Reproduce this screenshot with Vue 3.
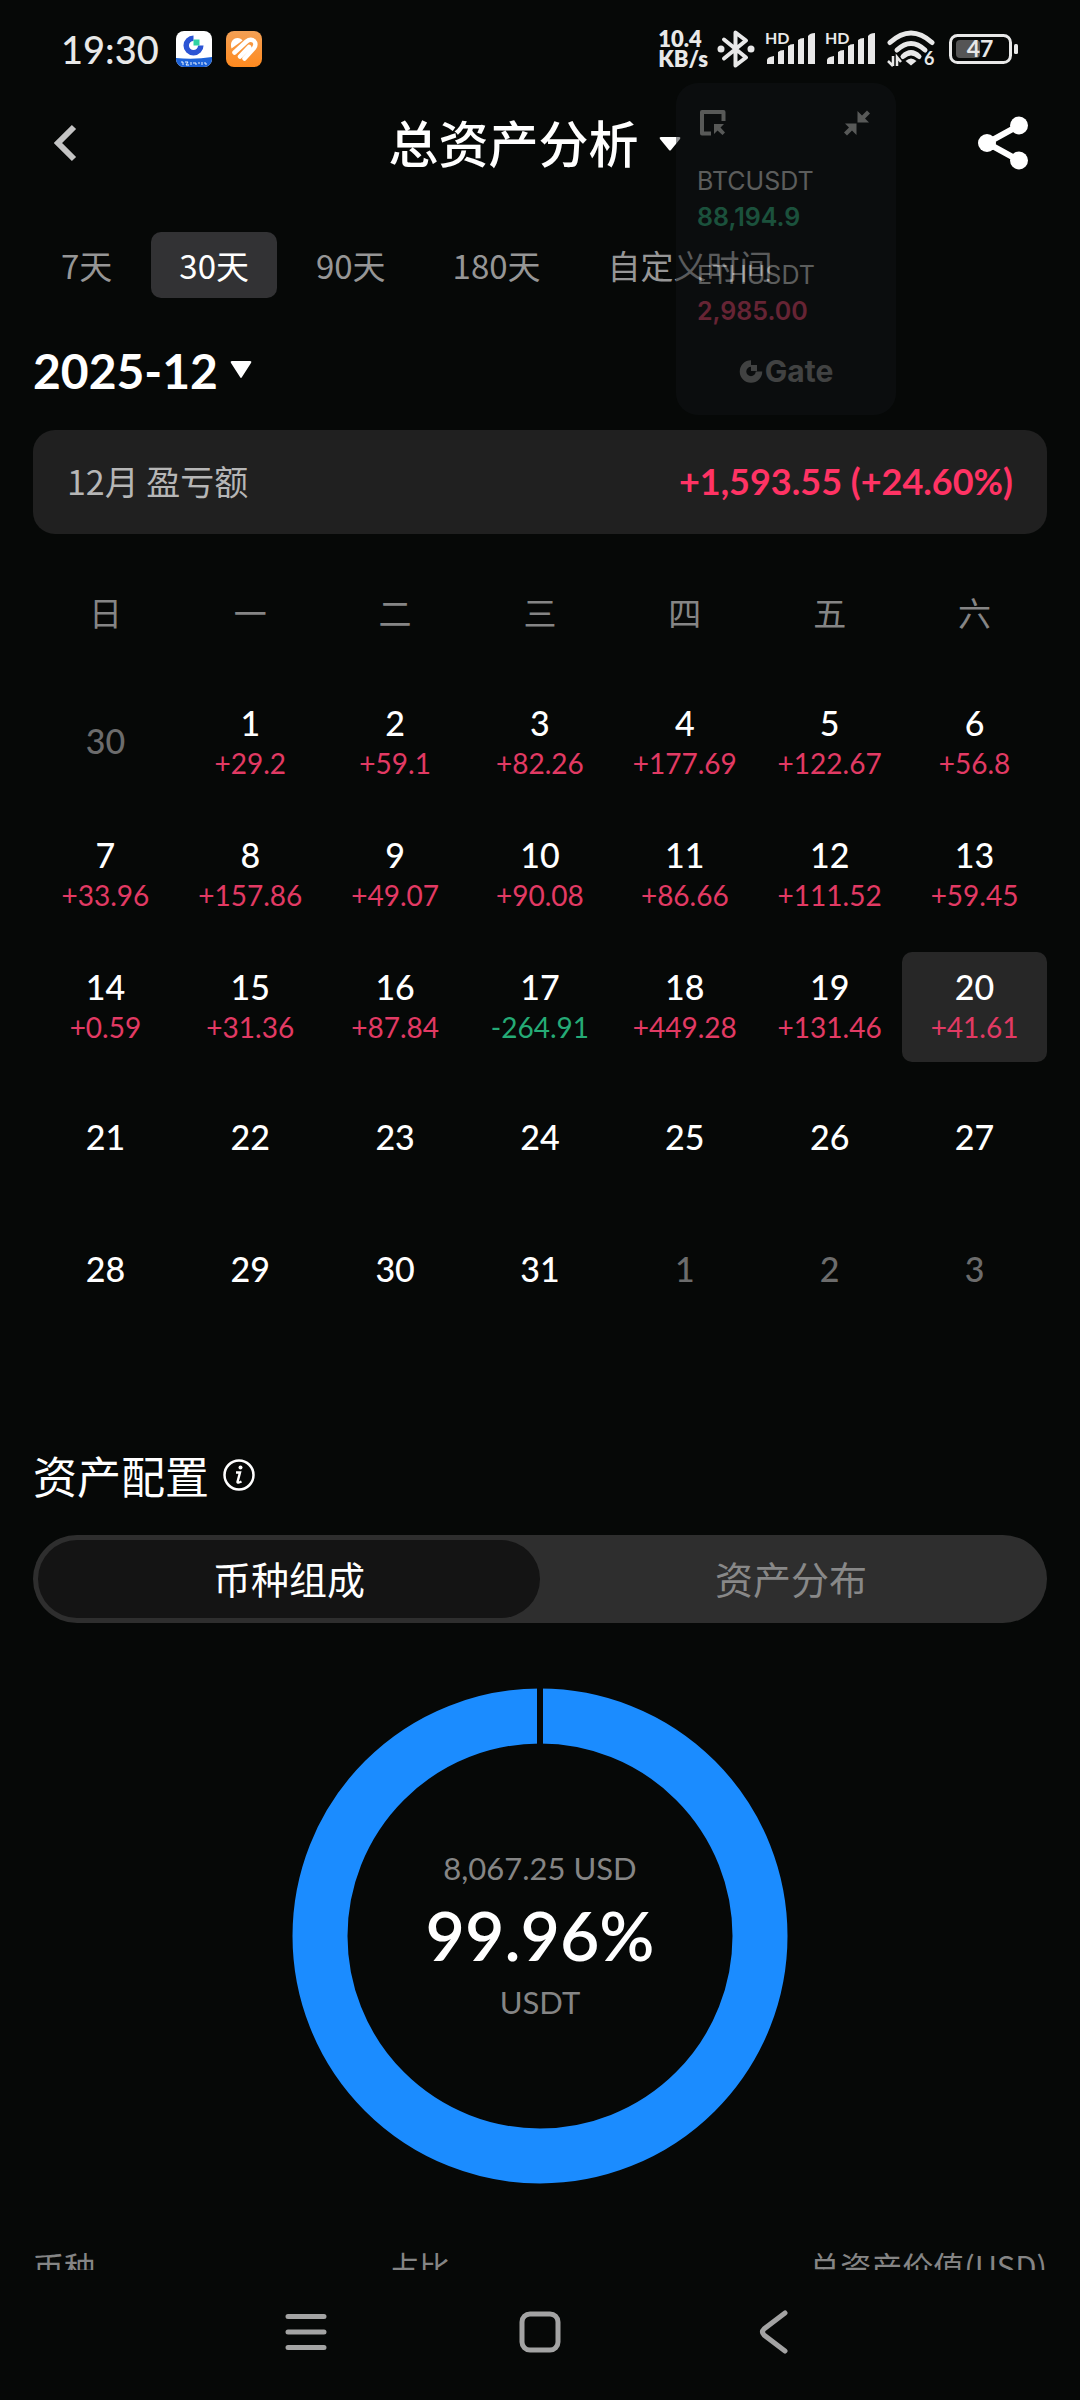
<script setup>
import { ref } from 'vue'

const ranges = ['7天', '30天', '90天', '180天', '自定义时间']
const activeRange = ref('30天')

const weekdays = ['日', '一', '二', '三', '四', '五', '六']
const d = (day, pnl = '', other = false) => ({ day, pnl, other })
const weeks = [
  [d(30, '', true), d(1, '+29.2'), d(2, '+59.1'), d(3, '+82.26'), d(4, '+177.69'), d(5, '+122.67'), d(6, '+56.8')],
  [d(7, '+33.96'), d(8, '+157.86'), d(9, '+49.07'), d(10, '+90.08'), d(11, '+86.66'), d(12, '+111.52'), d(13, '+59.45')],
  [d(14, '+0.59'), d(15, '+31.36'), d(16, '+87.84'), d(17, '-264.91'), d(18, '+449.28'), d(19, '+131.46'), d(20, '+41.61')],
  [d(21), d(22), d(23), d(24), d(25), d(26), d(27)],
  [d(28), d(29), d(30), d(31), d(1, '', true), d(2, '', true), d(3, '', true)],
]
const selectedDay = ref(20)

const segments = ['币种组成', '资产分布']
const activeSegment = ref('币种组成')

const tickers = [
  { pair: 'BTCUSDT', price: '88,194.9', trend: 'green' },
  { pair: 'ETHUSDT', price: '2,985.00', trend: 'red' },
]
</script>

<template>
  <div class="screen">
    <div class="status">
      <div class="status-side">
        <span class="clock">19:30</span>
        <svg class="app-icon" viewBox="0 0 36 36">
          <clipPath id="tile"><rect width="36" height="36" rx="8" /></clipPath>
          <g clip-path="url(#tile)">
            <rect width="36" height="36" fill="#fff" />
            <path d="M17.500 7.200A7.300 7.300 0 1 0 24.800 14.500" fill="none" stroke="#2b54d4" stroke-width="5.500" />
            <rect x="17.500" y="8.500" width="6" height="6" fill="#2fd3a4" />
            <path d="M0 27Q18 29 36 26V36H0Z" fill="#1c62d8" />
            <path d="M5 31h2v3M9 31h3l-2 3h3M15 31v3M17 32h3v2M22 32h2M26 31v3M28 32h2v2" fill="none" stroke="#e8f2ff" stroke-width="1" />
          </g>
        </svg>
        <svg class="app-icon" viewBox="0 0 36 36">
          <defs>
            <linearGradient id="warm" x1="0" y1="0" x2="0" y2="1">
              <stop offset="0" stop-color="#f3a055" />
              <stop offset="1" stop-color="#ff8a1f" />
            </linearGradient>
          </defs>
          <rect width="36" height="36" rx="8" fill="url(#warm)" />
          <path d="M5.500 17.500C3.500 11.500 7 7 11.500 7C14 7 15.500 8 16.500 9.500Z" fill="#fff" />
          <path d="M8.500 21.500L20.500 10.500C26.500 5.500 32 12 28 17L18.500 27.500M14 25.500L23 16" fill="none" stroke="#fff" stroke-width="4.500" stroke-linecap="round" />
        </svg>
      </div>
      <div class="status-side">
        <span class="speed"><span>10.4</span><span>KB/s</span></span>
        <svg width="38" height="40" viewBox="0 0 38 40" class="bt">
          <path d="M7 10.500L29 28.500L18.500 36.500V3.500L29 11.500L7 29.500" fill="none" stroke="#e8e8e8" stroke-width="4" stroke-linejoin="round" stroke-linecap="round" />
          <circle cx="4" cy="20" r="3.500" fill="#e8e8e8" /><circle cx="34" cy="20" r="3.500" fill="#e8e8e8" />
        </svg>
        <svg v-for="n in 2" :key="n" width="50" height="42" viewBox="0 -4 50 42" class="signal">
          <text x="0" y="12" font-size="16">HD</text>
          <path d="M2 32v-4q0-3 7-4v8ZM13 32V20q2-2 6-2v14ZM23 32V14q2-2 6-2v20ZM33 32V8q2-2 6-2v26ZM43 32V4q2-3 7-3v31Z" />
        </svg>
        <svg width="50" height="44" viewBox="0 -3 50 44" class="wifi">
          <g fill="none" stroke="#e8e8e8" stroke-width="5" stroke-linecap="round">
            <path d="M3 12.500Q24 -6.500 45 12.500" /><path d="M10 20Q24 7 38 20" /><path d="M16 26.500Q24 19 32 26.500" />
          </g>
          <path d="M18.500 31Q24 26 29.500 31L24 35.500Z" fill="#e8e8e8" />
          <path d="M6 26v10M1 31l5 5M10 36V27l4 5" fill="none" stroke="#e8e8e8" stroke-width="2.500" />
          <text x="37" y="35" font-size="18">6</text>
        </svg>
        <svg width="70" height="32" viewBox="0 0 70 32" class="battery">
          <rect x="7" y="7" width="24" height="18" rx="4" fill="#555" />
          <rect x="1.500" y="2.500" width="60" height="27" rx="7" fill="none" stroke="#e8e8e8" stroke-width="3" />
          <rect x="65" y="11" width="4" height="10" rx="1.500" fill="#e8e8e8" />
          <text x="31" y="24" font-size="23" text-anchor="middle">47</text>
        </svg>
      </div>
    </div>

    <header class="bar">
      <button class="icon-btn" aria-label="返回">
        <svg width="24" height="38" viewBox="0 0 24 38"><path d="M20 3L4 19L20 35" fill="none" stroke="#c4c4c4" stroke-width="6" /></svg>
      </button>
      <button class="title">
        总资产分析
        <svg width="22" height="16" viewBox="0 0 22 16"><path d="M2 1H20Q22 1 21 3L12 14Q11 15 10 14L1 3Q0 1 2 1Z" fill="#fff" /></svg>
      </button>
      <button class="icon-btn share" aria-label="分享">
        <svg width="52" height="54" viewBox="0 0 52 54">
          <path d="M42 9.500L10 27L42 44.500" fill="none" stroke="#fff" stroke-width="6" />
          <g fill="#fff"><circle cx="42" cy="9.500" r="9" /><circle cx="10" cy="27" r="9" /><circle cx="42" cy="44.500" r="9" /></g>
        </svg>
      </button>
    </header>

    <main class="content">
      <nav class="ranges">
        <button v-for="r in ranges" :key="r" class="range" :class="{ active: r === activeRange }" @click="activeRange = r">{{ r }}</button>
      </nav>

      <button class="month">
        2025-12
        <svg width="22" height="18" viewBox="0 0 22 18"><path d="M2 0H20Q22 0 21 2L12 16Q11 18 10 16L1 2Q0 0 2 0Z" fill="#fff" /></svg>
      </button>

      <section class="summary">
        <span class="summary-label">12月 盈亏额</span>
        <strong class="summary-value">+1,593.55 (+24.60%)</strong>
      </section>

      <table class="calendar">
        <thead>
          <tr><th v-for="w in weekdays" :key="w">{{ w }}</th></tr>
        </thead>
        <tbody>
          <tr v-for="(week, i) in weeks" :key="i">
            <td v-for="c in week" :key="c.day">
              <button class="day" :class="{ other: c.other, selected: !c.other && c.day === selectedDay }" @click="selectedDay = c.day">
                <span class="num">{{ c.day }}</span>
                <span v-if="c.pnl" class="pnl" :class="{ loss: c.pnl[0] === '-' }">{{ c.pnl }}</span>
              </button>
            </td>
          </tr>
        </tbody>
      </table>

      <h2 class="section-title">
        资产配置
        <svg width="34" height="34" viewBox="0 0 34 34">
          <circle cx="17" cy="17" r="14.500" fill="none" stroke="#fff" stroke-width="2.500" />
          <circle cx="18.500" cy="9.500" r="2" fill="#fff" />
          <path d="M14 14.500H18L15.500 24Q15.500 25.500 19.500 23.500" fill="none" stroke="#fff" stroke-width="2.400" />
        </svg>
      </h2>

      <div class="segmented">
        <button v-for="s in segments" :key="s" class="segment" :class="{ active: s === activeSegment }" @click="activeSegment = s">{{ s }}</button>
      </div>

      <div class="donut">
        <svg class="ring" viewBox="0 0 496 496">
          <circle cx="248" cy="248" r="220" fill="none" stroke="#1b8cff" stroke-width="55" />
          <rect x="245" y="0" width="6" height="60" fill="#060807" />
        </svg>
        <div class="donut-text">
          <span class="small">8,067.25 USD</span>
          <span class="big">99.96%</span>
          <span class="small">USDT</span>
        </div>
      </div>

      <table class="holdings">
        <thead>
          <tr><th>币种</th><th>占比</th><th>总资产价值(USD)</th></tr>
        </thead>
      </table>
    </main>

    <nav class="system">
      <button aria-label="最近任务">
        <svg width="42" height="44" viewBox="0 0 42 44"><path d="M3 6.500H39M3 22H39M3 37.500H39" stroke="#a3a3a3" stroke-width="5" stroke-linecap="round" /></svg>
      </button>
      <button aria-label="主屏幕">
        <svg width="42" height="44" viewBox="0 0 42 44"><rect x="3" y="4" width="36" height="36" rx="8" fill="none" stroke="#a3a3a3" stroke-width="5" /></svg>
      </button>
      <button aria-label="返回上一页">
        <svg width="42" height="44" viewBox="0 0 42 44"><path d="M32 3L11 19Q8 22 11 25L32 41" fill="none" stroke="#a3a3a3" stroke-width="5" stroke-linecap="round" /></svg>
      </button>
    </nav>

    <aside class="floating">
      <div class="floating-tools">
        <svg width="26" height="26" viewBox="0 0 26 26">
          <path d="M23.500 11V2H2V23.500H11" fill="none" stroke="#bbb" stroke-width="4" stroke-linejoin="round" />
          <path d="M14 14H24L20.500 17.500L25 22.500L22.500 25L17.500 20.500L14 24Z" fill="#bbb" />
        </svg>
        <svg width="26" height="26" viewBox="0 0 26 26">
          <path d="M13.500 1V12.500H25L21 8.500L26 3.500L23 0.500L18 5.500ZM12.500 25V13.500H1L5 17.500L0 22.500L3 25.500L8 20.500Z" fill="#bbb" />
        </svg>
      </div>
      <div v-for="t in tickers" :key="t.pair" class="ticker">
        <span class="pair">{{ t.pair }}</span>
        <span class="price" :class="t.trend">{{ t.price }}</span>
      </div>
      <div class="brand">
        <svg width="24" height="24" viewBox="0 0 24 24">
          <path d="M12 4.500A8 8 0 1 0 20 12.500" fill="none" stroke="#8a8a8a" stroke-width="6.500" />
          <rect x="12" y="6" width="6" height="6" fill="#8a8a8a" />
        </svg>
        Gate
      </div>
    </aside>
  </div>
</template>

<style>
body {
  margin: 0;
  background: #060807;
}
</style>

<style scoped>
.screen {
  position: relative;
  display: flex;
  flex-direction: column;
  height: 100vh;
  overflow: hidden;
  background: #060807;
  color: #fff;
  font-family: Lato, "Noto Sans CJK SC", sans-serif;
}
button {
  padding: 0;
  border: 0;
  background: none;
  color: inherit;
  font: inherit;
}
svg {
  display: block;
  flex: none;
}
.status {
  display: flex;
  align-items: center;
  justify-content: space-between;
  height: 98px;
  padding: 0 61px;
  color: #e8e8e8;
}
.status-side {
  display: flex;
  align-items: center;
}
.clock {
  margin-right: 17px;
  font-size: 38px;
  font-weight: 500;
}
.app-icon {
  width: 36px;
  height: 36px;
  margin-right: 14px;
}
.speed {
  display: flex;
  flex-direction: column;
  font-size: 22px;
  font-weight: 800;
  line-height: 20px;
}
.status text {
  fill: #e8e8e8;
  font-family: Lato, sans-serif;
  font-weight: 700;
}
.bt {
  margin: 0 10px 0 9px;
}
.signal {
  margin-right: 10px;
  fill: #e8e8e8;
}
.wifi {
  margin: 0 12px 0 2px;
}
.bar {
  display: grid;
  grid-template-columns: 1fr auto 1fr;
  align-items: center;
  height: 90px;
  padding: 0 51px 0 54px;
}
.title {
  display: flex;
  align-items: center;
  gap: 20px;
  padding: 2px 14px 0 0;
  font-size: 50px;
  font-weight: 500;
  line-height: 72px;
}
.icon-btn {
  justify-self: start;
}
.icon-btn.share {
  justify-self: end;
}
.content {
  flex: 1;
  min-height: 0;
  overflow: hidden;
  padding: 44px 33px 0;
}
.ranges {
  display: flex;
  gap: 11px;
}
.range {
  height: 66px;
  padding: 0 28px;
  border-radius: 10px;
  color: #969696;
  font-family: "Noto Sans CJK SC", sans-serif;
  font-size: 33px;
  white-space: nowrap;
}
.range.active {
  background: #323234;
  color: #fff;
}
.month {
  display: flex;
  align-items: center;
  gap: 12px;
  height: 54px;
  margin-top: 45px;
  font-size: 48px;
  font-weight: 700;
}
.summary {
  display: flex;
  align-items: center;
  justify-content: space-between;
  box-sizing: border-box;
  height: 104px;
  margin-top: 33px;
  padding: 0 34px 3px;
  border-radius: 22px;
  background: #202020;
}
.summary-label {
  color: #b6b6b6;
  font-family: "Noto Sans CJK SC", sans-serif;
  font-size: 34px;
}
.summary-value {
  color: #ff3364;
  font-size: 36px;
  font-weight: 700;
}
.calendar {
  width: 100%;
  margin-top: 4px;
  border-spacing: 0 22px;
  table-layout: fixed;
}
.calendar th {
  box-sizing: border-box;
  height: 106px;
  padding: 0 0 3px;
  color: #858585;
  font-size: 33px;
  font-weight: 400;
}
.calendar td {
  padding: 0;
}
.day {
  display: flex;
  flex-direction: column;
  align-items: center;
  justify-content: center;
  box-sizing: border-box;
  width: 100%;
  height: 110px;
  padding-bottom: 4px;
  border-radius: 10px;
}
.day.selected {
  background: #272727;
}
.num {
  font-size: 34px;
  font-weight: 500;
  line-height: 44px;
}
.other {
  color: #6c6c6c;
}
.pnl {
  color: #e23a64;
  font-size: 28px;
  line-height: 36px;
}
.pnl.loss {
  color: #25ab76;
}
.section-title {
  display: flex;
  align-items: center;
  gap: 13px;
  height: 58px;
  margin: 98px 0 0;
  font-size: 44px;
  font-weight: 400;
}
.segmented {
  display: flex;
  margin-top: 31px;
  padding: 5px;
  border-radius: 44px;
  background: #2e2e2e;
}
.segment {
  flex: 1;
  height: 78px;
  padding-bottom: 3px;
  border-radius: 39px;
  color: #888;
  font-size: 38px;
}
.segment.active {
  background: #141414;
  color: #fff;
}
.donut {
  display: grid;
  place-items: center;
  margin-top: 65px;
}
.donut > * {
  grid-area: 1 / 1;
}
.ring {
  width: 496px;
  height: 496px;
}
.donut-text {
  display: flex;
  flex-direction: column;
  align-items: center;
  padding-bottom: 3px;
}
.small {
  color: #858585;
  font-size: 31px;
  line-height: 44px;
}
.big {
  font-size: 68px;
  font-weight: 600;
  line-height: 90px;
}
.holdings {
  width: 100%;
  margin-top: 62px;
  border-spacing: 0;
  table-layout: fixed;
}
.holdings th {
  padding: 0;
  color: #858585;
  font-family: "Noto Sans CJK SC", sans-serif;
  font-size: 31px;
  font-weight: 400;
  line-height: 40px;
  text-align: left;
}
.holdings th:first-child {
  width: 35%;
}
.holdings th:last-child {
  text-align: right;
}
.system {
  display: grid;
  grid-template-columns: repeat(3, 1fr);
  align-items: start;
  justify-items: center;
  width: 65%;
  height: 90px;
  margin: 0 auto;
  padding-top: 40px;
}
.floating {
  position: absolute;
  top: 83px;
  right: 184px;
  box-sizing: border-box;
  width: 220px;
  height: 332px;
  padding: 27px 26px 0 21px;
  border-radius: 22px;
  background: #121518;
  font-family: Inter, sans-serif;
  opacity: 0.45;
}
.floating-tools {
  display: flex;
  justify-content: space-between;
  margin: 0 0 27px 3px;
}
.ticker {
  display: flex;
  flex-direction: column;
  margin-bottom: 22px;
}
.pair {
  color: #c4c4c4;
  font-size: 25px;
  line-height: 36px;
}
.price {
  font-size: 25px;
  font-weight: 600;
  line-height: 36px;
}
.green {
  color: #35aa7d;
}
.red {
  color: #dc466c;
}
.brand {
  display: flex;
  align-items: center;
  justify-content: center;
  gap: 2px;
  padding-left: 5px;
  color: #8a8a8a;
  font-size: 30px;
  font-weight: 700;
  line-height: 40px;
}
</style>
